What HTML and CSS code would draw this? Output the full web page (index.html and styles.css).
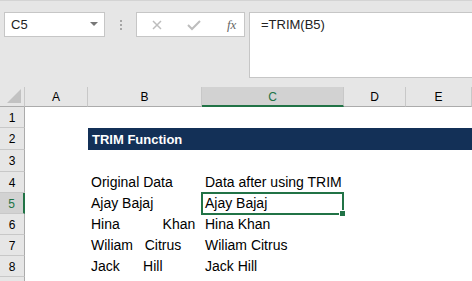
FILE: index.html
```html
<!DOCTYPE html>
<html lang="en">
<head>
  <meta charset="UTF-8">
  <title>TRIM Function</title>
  <link rel="stylesheet" href="styles.css">
</head>
<body>
  <div class="toolbar">
    <div class="namebox">
      <span>C5</span>
      <span class="caret"></span>
    </div>
    <div class="grip"><i></i><i></i><i></i></div>
    <div class="fxbox">
      <svg class="ic" width="14" height="14" viewBox="0 0 14 14"><path d="M3 3L11 11M11 3L3 11" stroke="#bdbdbd" stroke-width="1.5" fill="none"/></svg>
      <svg class="ic" width="16" height="14" viewBox="0 0 16 14"><path d="M2 7L6 11L14 3" stroke="#bdbdbd" stroke-width="2" fill="none"/></svg>
      <span class="fx">fx</span>
    </div>
    <div class="formula">=TRIM(B5)</div>
  </div>

  <div class="sheet">
    <div class="hd corner"><span class="tri"></span></div>
    <div class="hd">A</div>
    <div class="hd">B</div>
    <div class="hd active">C</div>
    <div class="hd">D</div>
    <div class="hd">E</div>

    <div class="rn">1</div>
    <div class="row-blank"></div>

    <div class="rn">2</div>
    <div class="cell"></div>
    <div class="title">TRIM Function</div>

    <div class="rn">3</div>
    <div class="row-blank"></div>

    <div class="rn">4</div>
    <div class="cell"></div>
    <div class="cell">Original Data</div>
    <div class="cell">Data after using TRIM</div>
    <div class="cell"></div>
    <div class="cell"></div>

    <div class="rn active">5</div>
    <div class="cell"></div>
    <div class="cell">Ajay Bajaj</div>
    <div class="cell selected">Ajay Bajaj<span class="handle"></span></div>
    <div class="cell"></div>
    <div class="cell"></div>

    <div class="rn">6</div>
    <div class="cell"></div>
    <div class="cell">Hina           Khan</div>
    <div class="cell">Hina Khan</div>
    <div class="cell"></div>
    <div class="cell"></div>

    <div class="rn">7</div>
    <div class="cell"></div>
    <div class="cell">Wiliam   Citrus</div>
    <div class="cell">Wiliam Citrus</div>
    <div class="cell"></div>
    <div class="cell"></div>

    <div class="rn">8</div>
    <div class="cell"></div>
    <div class="cell">Jack      Hill</div>
    <div class="cell">Jack Hill</div>
    <div class="cell"></div>
    <div class="cell"></div>

    <div class="rn"></div>
    <div class="row-blank"></div>
  </div>
</body>
</html>
```

FILE: styles.css
```css
body {
  margin: 0;
  width: 472px;
  height: 281px;
  overflow: hidden;
  background: #ffffff;
  font-family: "Liberation Sans", Arial, sans-serif;
  color: #000;
}

.toolbar {
  height: 87px;
  background: #e6e6e6;
  border-top: 1px solid #d4d4d4;
  display: flex;
  align-items: flex-start;
  padding-top: 11px;
  padding-left: 4px;
  box-sizing: border-box;
}
.namebox {
  width: 101px;
  height: 25px;
  box-sizing: border-box;
  background: #fff;
  border: 1px solid #c6c6c6;
  display: flex;
  align-items: center;
  justify-content: space-between;
  padding: 0 6px 0 6px;
  font-size: 13px;
  color: #222;
}
.caret {
  width: 0;
  height: 0;
  border-left: 4px solid transparent;
  border-right: 4px solid transparent;
  border-top: 4px solid #777;
  margin-top: -2px;
}
.grip {
  width: 31px;
  height: 25px;
  display: flex;
  flex-direction: column;
  align-items: center;
  justify-content: center;
  gap: 2px;
}
.grip i {
  width: 2px;
  height: 2px;
  background: #a6a6a6;
}
.fxbox {
  width: 109px;
  height: 25px;
  box-sizing: border-box;
  background: #fff;
  border: 1px solid #c6c6c6;
  display: flex;
  align-items: center;
  padding-left: 13px;
}
.fxbox .ic { margin-right: 22px; }
.fx {
  font-family: "Liberation Serif", serif;
  font-style: italic;
  font-size: 13px;
  color: #666;
  margin-left: 3px;
}
.formula {
  margin-left: 4px;
  flex: 1;
  height: 66px;
  box-sizing: border-box;
  background: #fff;
  border: 1px solid #c6c6c6;
  border-right: none;
  padding: 4px 0 0 11px;
  font-size: 13px;
  color: #222;
}

.sheet {
  display: grid;
  grid-template-columns: 25px 63px 114px 142px 62px 66px;
  grid-template-rows: 20px 21px 22px 22px 21px 21px 21px 21px 21px 21px;
}
.hd {
  background: #e6e6e6;
  border-right: 1px solid #c8c8c8;
  border-bottom: 1px solid #ababab;
  box-sizing: border-box;
  font-size: 12px;
  display: flex;
  align-items: center;
  justify-content: center;
  padding-top: 1px;
}
.hd.active {
  background: #d2d2d2;
  color: #217346;
  border-bottom: 2px solid #217346;
}
.corner {
  position: relative;
}
.tri {
  position: absolute;
  right: 3px;
  bottom: 3px;
  width: 0;
  height: 0;
  border-left: 14px solid transparent;
  border-bottom: 14px solid #c2c2c2;
}
.rn {
  background: #e6e6e6;
  border-right: 1px solid #ababab;
  border-bottom: 1px solid #c8c8c8;
  box-sizing: border-box;
  font-size: 12px;
  display: flex;
  align-items: center;
  justify-content: center;
  padding-top: 1px;
}
.rn.active {
  background: #d2d2d2;
  color: #217346;
  border-right: 2px solid #217346;
}
.row-blank {
  grid-column: 2 / -1;
}
.cell {
  font-size: 14px;
  white-space: pre;
  padding: 2px 0 0 3px;
  box-sizing: border-box;
  position: relative;
}
.title {
  grid-column: 3 / -1;
  background: #133057;
  color: #fff;
  font-weight: bold;
  font-size: 13px;
  padding: 4px 0 0 4px;
  box-sizing: border-box;
}
.selected {
  border: 2px solid #217346;
  margin: -1px 0 -1px -1px;
  padding: 1px 0 0 2px;
}
.handle {
  position: absolute;
  right: -4px;
  bottom: -4px;
  width: 5px;
  height: 5px;
  background: #217346;
  border: 1px solid #fff;
}
```
